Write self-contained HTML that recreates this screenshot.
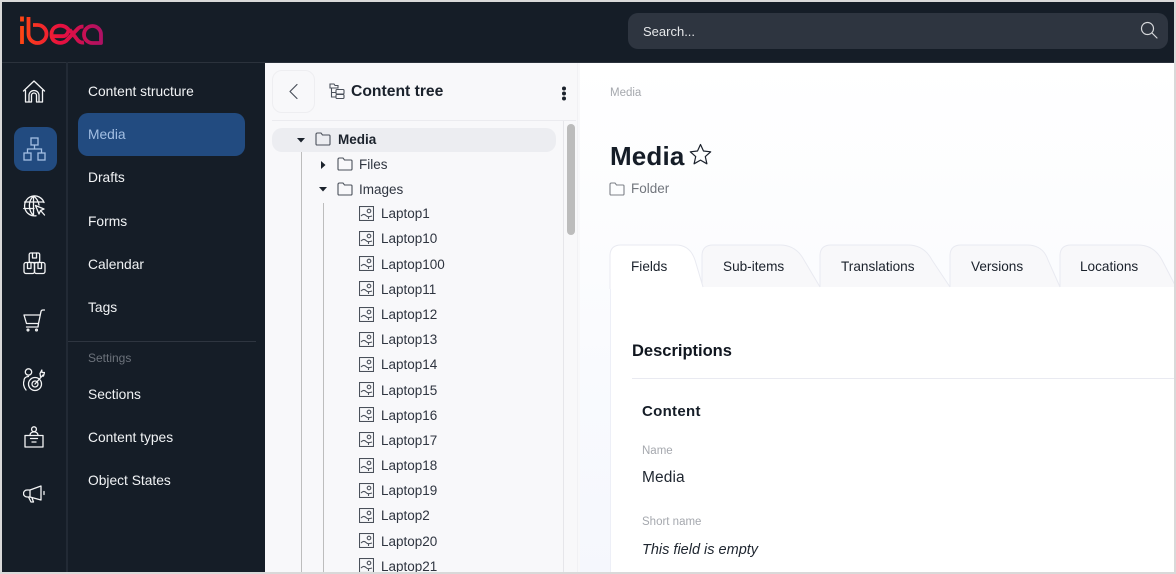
<!DOCTYPE html>
<html lang="en"><head><meta charset="utf-8"><title>Media</title>
<style>
*{box-sizing:border-box}
html,body{margin:0;padding:0;width:1176px;height:574px;overflow:hidden;background:#d9d9d9}
body{position:relative;font-family:"Liberation Sans",sans-serif;font-size:13.5px}
div,span.t,svg{position:absolute}
.t{white-space:nowrap;line-height:20px;height:20px}
.n{left:88px;color:#f1f3f5;font-size:13.8px;margin-top:1px}
.r{left:381px;color:#2f3540;margin-top:1px}
.f{fill:none;stroke:#4a505a;stroke-width:1.1}
.ic{fill:none;stroke:#f3f4f5;stroke-width:1.3;stroke-linecap:round;stroke-linejoin:round}
.tb{color:#1a212b;font-size:13.6px;margin-top:1px}
</style></head><body>
<div id="app" style="left:2px;top:2px;width:1172px;height:570px;overflow:hidden;background:#fff">
<div style="left:-2px;top:-2px;width:1176px;height:574px">

<!-- backgrounds -->
<div style="left:0;top:0;width:1176px;height:62px;background:#151d27"></div>
<div style="left:0;top:62px;width:265px;height:512px;background:#151d27"></div>
<div style="left:0;top:62px;width:1176px;height:1px;background:#2b323c"></div>
<div style="left:66px;top:62px;width:2px;height:512px;background:#222a35"></div>
<div style="left:265px;top:63px;width:315px;height:511px;background:#f8f8fa"></div>
<div style="left:580px;top:63px;width:596px;height:511px;background:linear-gradient(180deg,#fff 0,#fbfcfe 40%,#f5f7fd 100%)"></div>

<!-- logo -->
<svg style="left:18px;top:14px" width="88" height="34" viewBox="18 14 88 34" fill="none"><title>ibexa</title>
<defs><linearGradient id="lg" gradientUnits="userSpaceOnUse" x1="20" y1="0" x2="102" y2="0"><stop offset="0" stop-color="#ff4713"/><stop offset=".5" stop-color="#e8103f"/><stop offset="1" stop-color="#ae1164"/></linearGradient></defs>
<g stroke="url(#lg)" stroke-width="3.8" stroke-linecap="butt" stroke-linejoin="round">
<path d="M22 16.500v5M22 26v18"/>
<path d="M28.500 17V34a9 9 0 1 0 9-9H33"/>
<path d="M51.500 36.200H63C67 36.200 70 30 67.500 28.500 62 23 51 25.500 51.500 35 52 43 61 44.500 66 41L78 28.500Q80 26.500 83.500 26.500M69.500 29.500 78 40.500Q80.500 43 84 42.500"/>
<path d="M101 34.500a8.500 8.500 0 1 0-8.500 8.500H101V34.500"/>
</g></svg>

<!-- search -->
<div style="left:628px;top:13px;width:540px;height:36px;background:#2e3540;border-radius:10px"></div>
<span class="t" style="left:643px;top:22px;color:#e6e8ea;font-size:13px">Search...</span>
<svg style="left:1140px;top:21px" width="18" height="18" viewBox="0 0 18 18" fill="none" stroke="#d5d7da" stroke-width="1.2"><circle cx="7.500" cy="7.500" r="6"/><path d="M12 12l5 5" stroke-linecap="round"/></svg>

<!-- rail -->
<div style="left:14px;top:127px;width:43px;height:44px;background:#224b80;border-radius:10px"></div>
<svg class="ic" style="left:22px;top:79px" width="24" height="24" viewBox="0 0 24 24"><path d="M1.500 12 12 2 22.500 12M3.500 11.500V23H9.500V16.500A2.500 2.500 0 0 1 14.500 16.500V23H20.500V11.500M7 23V16.500A5 5 0 0 1 17 16.500V23"/></svg>
<svg style="left:23px;top:137px" width="23" height="24" viewBox="0 0 23 24" fill="none" stroke="#a3bfe3" stroke-width="1.3"><rect x="8" y="1" width="7" height="7"/><rect x="1" y="16" width="7" height="7"/><rect x="15" y="16" width="7" height="7"/><path d="M11.500 8v4M4.500 16v-4h14v4"/></svg>
<svg class="ic" style="left:23px;top:195px" width="23" height="23" viewBox="0 0 23 23"><path d="M21 7.500A10 10 0 1 0 13 20.800M10.500 1C5 6 5 15 10.500 20.500M10.500 1C14 3.500 15.500 6.500 16 10M1.500 7H20M.8 13.500H11M10.500 1V20"/><path d="M12.500 10.500 21 14l-3.500 1.500L16 19Z"/><path d="M18 16l3.500 4"/></svg>
<svg class="ic" style="left:23px;top:252px" width="23" height="23" viewBox="0 0 23 23"><rect x="1" y="10.500" width="10.500" height="11" rx="2"/><rect x="11.500" y="10.500" width="10.500" height="11" rx="2"/><rect x="6.200" y="1" width="10.500" height="9.500" rx="1.500"/><path d="M9.500 1v5h4V1M4.500 10.500v6h3.500v-6M15 10.500v6h3.500v-6"/></svg>
<svg class="ic" style="left:23px;top:309px" width="22" height="23" viewBox="0 0 22 23"><path d="M1 6H17M1 6l2.500 8.500H15.500L18 2.500Q18.300 1 20 1H21.500M15.500 14.500 15 18H3.500"/><circle cx="5" cy="21" r=".9"/><circle cx="13.500" cy="21" r=".9"/></svg>
<svg class="ic" style="left:23px;top:368px" width="22" height="24" viewBox="0 0 22 24"><circle cx="5.500" cy="4" r="3.200"/><path d="M1 13C1 10 3 8.500 5.500 8.500M3 22C.5 19 0 15 1 13"/><circle cx="12" cy="16" r="6.500"/><circle cx="12" cy="16" r="3"/><path d="M12 16 20 7M17 5.500l.5 3 3-.5L21.500 4.500 19 4.500 18.800 2Z"/></svg>
<svg class="ic" style="left:24px;top:426px" width="20" height="22" viewBox="0 0 20 22"><circle cx="10" cy="3.200" r="2.400"/><path d="M6 9.500C6 7 8 5.800 10 5.800S14 7 14 9.500M1 9.500H19V21H1ZM6.500 12.500H13.500M8 16H12"/></svg>
<svg class="ic" style="left:23px;top:485px" width="22" height="18" viewBox="0 0 22 18"><path d="M18 1 7 5H4A3.500 3.500 0 0 0 4 12H7L18 15ZM7 5V12M5.500 12 8 17H10.500L9 13M21 6.500V9.500"/></svg>

<!-- nav -->
<span class="t n" style="top:81px">Content structure</span>
<div style="left:78px;top:113px;width:167px;height:43px;background:#224b80;border-radius:10px"></div>
<span class="t n" style="top:124px;color:#a3bfe3">Media</span>
<span class="t n" style="top:167px">Drafts</span>
<span class="t n" style="top:211px">Forms</span>
<span class="t n" style="top:254px">Calendar</span>
<span class="t n" style="top:297px">Tags</span>
<div style="left:68px;top:341px;width:188px;height:1px;background:#2e3540"></div>
<span class="t" style="left:88px;top:348px;font-size:12px;color:#6c727b">Settings</span>
<span class="t n" style="top:384px">Sections</span>
<span class="t n" style="top:427px">Content types</span>
<span class="t n" style="top:470px">Object States</span>

<!-- tree header -->
<div style="left:272px;top:70px;width:43px;height:43px;border:1px solid #eeeef1;border-radius:10px"></div>
<svg style="left:288px;top:83px" width="11" height="17" viewBox="0 0 11 17" fill="none" stroke="#4a505a" stroke-width="1.200" stroke-linecap="round" stroke-linejoin="round"><path d="M9 1.500 2 8.500l7 7"/></svg>
<svg style="left:329px;top:83px" width="16" height="16" viewBox="0 0 16 16" fill="none" stroke="#4a505a" stroke-width="1.100"><path d="M1 1H5L6 2.500H9V5H1ZM2.500 5V14H7M2.500 9.500H7"/><rect x="7" y="6.500" width="8" height="4.500" rx="1"/><rect x="7" y="11.500" width="8" height="4" rx="1"/></svg>
<span class="t" style="left:351px;top:82px;font-size:15.7px;font-weight:bold;color:#1b222c">Content tree</span>
<svg style="left:561px;top:86px" width="6" height="15" viewBox="0 0 6 15" fill="#1b222c"><circle cx="3" cy="2.500" r="2"/><circle cx="3" cy="7.500" r="2"/><circle cx="3" cy="12.500" r="2"/></svg>
<div style="left:272px;top:120px;width:304px;height:1px;background:#ebebef"></div>

<!-- tree chrome -->
<div style="left:563px;top:121px;width:1px;height:453px;background:#e6e6ea"></div>
<div style="left:577px;top:63px;width:1px;height:511px;background:#f1f1f4"></div>
<div style="left:567px;top:124px;width:8px;height:111px;background:#bcbcbc;border-radius:4px"></div>
<div style="left:272px;top:128px;width:284px;height:24px;background:#ecedf1;border-radius:10px"></div>
<div style="left:301px;top:152px;width:1px;height:422px;background:#bdbdbd"></div>
<div style="left:323px;top:203px;width:1px;height:371px;background:#bdbdbd"></div>

<!-- tree rows -->
<svg style="left:297px;top:138px" width="8" height="5"><path d="M0 0H8L4 4.500Z" fill="#1b222c"/></svg>
<svg class="f" style="left:315px;top:132px" width="16" height="14" viewBox="0 0 16 14"><path d="M1 2.500Q1 1 2.500 1H6L7.500 3H14Q15 3 15 4V12Q15 13 14 13H2Q1 13 1 12Z"/></svg>
<span class="t" style="left:338px;top:130px;font-weight:bold;color:#1b222c">Media</span>

<svg style="left:321px;top:161px" width="5" height="8"><path d="M0 0V8L4.500 4Z" fill="#1b222c"/></svg>
<svg class="f" style="left:337px;top:157px" width="16" height="14" viewBox="0 0 16 14"><path d="M1 2.500Q1 1 2.500 1H6L7.500 3H14Q15 3 15 4V12Q15 13 14 13H2Q1 13 1 12Z"/></svg>
<span class="t" style="left:359px;top:155px;color:#2f3540">Files</span>

<svg style="left:319px;top:187px" width="8" height="5"><path d="M0 0H8L4 4.500Z" fill="#1b222c"/></svg>
<svg class="f" style="left:337px;top:182px" width="16" height="14" viewBox="0 0 16 14"><path d="M1 2.500Q1 1 2.500 1H6L7.500 3H14Q15 3 15 4V12Q15 13 14 13H2Q1 13 1 12Z"/></svg>
<span class="t" style="left:359px;top:180px;color:#2f3540">Images</span>

<svg width="0" height="0" style="left:0;top:0"><defs><g id="im" fill="none" stroke="#4a505a" stroke-width="1.100"><rect x=".5" y=".5" width="14" height="14"/><circle cx="10" cy="5" r="1.800"/><path d="M2 10C4 8 5.500 8 7 9.500S10 11 13 10M9.500 10.500V13"/></g></defs></svg>
<svg style="left:359px;top:206px" width="15" height="15"><use href="#im"/></svg><span class="t r" style="top:203px">Laptop1</span>
<svg style="left:359px;top:231px" width="15" height="15"><use href="#im"/></svg><span class="t r" style="top:228px">Laptop10</span>
<svg style="left:359px;top:256px" width="15" height="15"><use href="#im"/></svg><span class="t r" style="top:254px">Laptop100</span>
<svg style="left:359px;top:281px" width="15" height="15"><use href="#im"/></svg><span class="t r" style="top:279px">Laptop11</span>
<svg style="left:359px;top:307px" width="15" height="15"><use href="#im"/></svg><span class="t r" style="top:304px">Laptop12</span>
<svg style="left:359px;top:332px" width="15" height="15"><use href="#im"/></svg><span class="t r" style="top:329px">Laptop13</span>
<svg style="left:359px;top:357px" width="15" height="15"><use href="#im"/></svg><span class="t r" style="top:354px">Laptop14</span>
<svg style="left:359px;top:382px" width="15" height="15"><use href="#im"/></svg><span class="t r" style="top:380px">Laptop15</span>
<svg style="left:359px;top:407px" width="15" height="15"><use href="#im"/></svg><span class="t r" style="top:405px">Laptop16</span>
<svg style="left:359px;top:432px" width="15" height="15"><use href="#im"/></svg><span class="t r" style="top:430px">Laptop17</span>
<svg style="left:359px;top:458px" width="15" height="15"><use href="#im"/></svg><span class="t r" style="top:455px">Laptop18</span>
<svg style="left:359px;top:483px" width="15" height="15"><use href="#im"/></svg><span class="t r" style="top:480px">Laptop19</span>
<svg style="left:359px;top:508px" width="15" height="15"><use href="#im"/></svg><span class="t r" style="top:505px">Laptop2</span>
<svg style="left:359px;top:533px" width="15" height="15"><use href="#im"/></svg><span class="t r" style="top:531px">Laptop20</span>
<svg style="left:359px;top:558px" width="15" height="15"><use href="#im"/></svg><span class="t r" style="top:556px">Laptop21</span>

<!-- main -->
<span class="t" style="left:610px;top:83px;font-size:11.5px;color:#a5a8ae">Media</span>
<span class="t" style="left:610px;top:141px;height:30px;line-height:30px;font-size:26px;font-weight:bold;color:#151d27;letter-spacing:.15px">Media</span>
<svg style="left:689px;top:143px" width="23" height="23" viewBox="0 0 23 23" fill="none" stroke="#1b222c" stroke-width="1.200" stroke-linejoin="round"><path d="M11.500 1.500 14.500 8 21.700 8.800 16.300 13.600 17.900 20.800 11.500 17.100 5.100 20.800 6.700 13.600 1.300 8.800 8.500 8Z"/></svg>
<svg style="left:609px;top:182px" width="16" height="14" viewBox="0 0 16 14" fill="none" stroke="#7d8188" stroke-width="1.100"><path d="M1 2.500Q1 1 2.500 1H6L7.500 3H14Q15 3 15 4V12Q15 13 14 13H2Q1 13 1 12Z"/></svg>
<span class="t" style="left:631px;top:179px;color:#72767d">Folder</span>

<!-- content panel -->
<div style="left:610px;top:287px;width:566px;height:287px;background:#fff;border-left:1px solid #edeff7"></div>
<!-- tabs -->
<svg style="left:609px;top:243px" width="567" height="46" viewBox="609 243 567 46">
<g fill="#f8f8fa" stroke="#e9eaf1" stroke-width="1">
<path d="M702 287V256Q702 245 713 245H780Q796 245 804 260L820 287"/>
<path d="M820 287V256Q820 245 831 245H908Q924 245 932 260L950 287"/>
<path d="M950 287V256Q950 245 961 245H1027Q1043 245 1048 260L1060 287"/>
<path d="M1060 287V256Q1060 245 1071 245H1138Q1154 245 1162 260L1176 287"/>
<path d="M610 289V256Q610 245 621 245H676Q690 245 695 260L703 287" fill="#fff"/>
</g>
<rect x="611" y="284" width="90" height="5" fill="#fff"/>
</svg>
<span class="t tb" style="left:631px;top:256px">Fields</span>
<span class="t tb" style="left:723px;top:256px">Sub-items</span>
<span class="t tb" style="left:841px;top:256px">Translations</span>
<span class="t tb" style="left:971px;top:256px">Versions</span>
<span class="t tb" style="left:1080px;top:256px">Locations</span>

<span class="t" style="left:632px;top:341px;font-size:16.5px;font-weight:bold;color:#10161f">Descriptions</span>
<div style="left:632px;top:378px;width:544px;height:1px;background:#e9eaf1"></div>
<span class="t" style="left:642px;top:402px;font-size:15px;font-weight:bold;color:#151d27;letter-spacing:.3px">Content</span>
<span class="t" style="left:642px;top:441px;font-size:11.5px;color:#a5a8ae">Name</span>
<span class="t" style="left:642px;top:468px;font-size:15.5px;color:#1f2630;letter-spacing:.1px">Media</span>
<span class="t" style="left:642px;top:512px;font-size:11.5px;color:#a5a8ae">Short name</span>
<span class="t" style="left:642px;top:540px;font-size:14.5px;font-style:italic;color:#1f2630">This field is empty</span>

</div></div>
</body></html>
